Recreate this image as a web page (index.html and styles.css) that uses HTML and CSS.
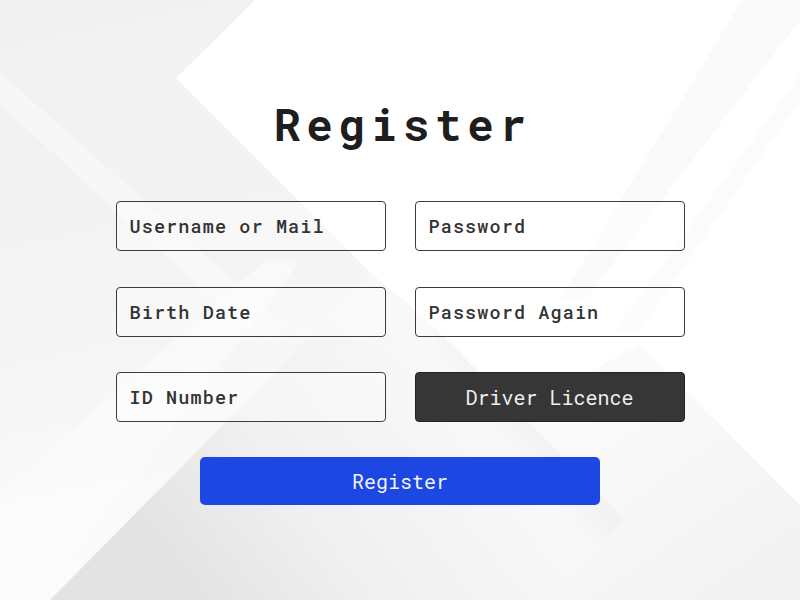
FILE: index.html
```html
<!DOCTYPE html>
<html lang="en">
<head>
<meta charset="utf-8">
<title>Register</title>
<link rel="stylesheet" href="styles.css">
</head>
<body>
<div class="page">
  <svg class="backdrop" width="800" height="600" viewBox="0 0 800 600" aria-hidden="true">
    <defs>
      <linearGradient id="gTL" gradientUnits="userSpaceOnUse" x1="0" y1="0" x2="120" y2="560">
        <stop offset="0" stop-color="#f1f1f1"/>
        <stop offset="0.55" stop-color="#f4f4f4"/>
        <stop offset="1" stop-color="#fbfbfb"/>
      </linearGradient>
      <linearGradient id="gBC" gradientUnits="userSpaceOnUse" x1="170" y1="570" x2="430" y2="370">
        <stop offset="0" stop-color="#e3e3e3"/>
        <stop offset="0.45" stop-color="#f0f0f0"/>
        <stop offset="1" stop-color="#f8f8f8"/>
      </linearGradient>
      <linearGradient id="gAR" gradientUnits="userSpaceOnUse" x1="505" y1="445" x2="585" y2="380">
        <stop offset="0" stop-color="#e8e8e8" stop-opacity="0"/>
        <stop offset="1" stop-color="#e6e6e6"/>
      </linearGradient>
      <linearGradient id="gBR" gradientUnits="userSpaceOnUse" x1="620" y1="400" x2="760" y2="600">
        <stop offset="0" stop-color="#fafafa"/>
        <stop offset="1" stop-color="#f2f2f2"/>
      </linearGradient>
    </defs>
    <rect width="800" height="600" fill="#ffffff"/>
    <polygon points="0,0 255,0 176,78 420,322 362,284 50,600 0,600" fill="url(#gTL)"/>
    <polygon points="0,72 0,104 262,346 284,326" fill="#fafafa" opacity="0.6"/>
    <polygon points="0,494 268,258 300,262 40,600 0,600" fill="#fcfcfc" opacity="0.6"/>
    <polygon points="640,345 800,505 800,600 545,600 625,520 515,410" fill="url(#gBR)"/>
    <polygon points="560,368 800,128 800,146 578,376" fill="#ffffff"/>
    <polygon points="50,600 362,284 370,272 430,323 625,520 545,600" fill="url(#gBC)"/>
    <polygon points="430,323 625,520 600,545 458,404" fill="url(#gAR)"/>
    <polygon points="742,0 800,0 800,20 585,300 560,300" fill="#f7f7f7" opacity="0.6"/>
    <polygon points="800,75 800,100 640,330 615,330" fill="#f8f8f8" opacity="0.6"/>
  </svg>

  <main class="form-wrap">
    <h1 class="title">Register</h1>
    <div class="fields">
      <div class="field">Username or Mail</div>
      <div class="field">Password</div>
      <div class="field">Birth Date</div>
      <div class="field">Password Again</div>
      <div class="field">ID Number</div>
      <button class="licence" type="button">Driver Licence</button>
    </div>
    <button class="submit" type="button">Register</button>
  </main>
</div>
</body>
</html>
```

FILE: styles.css
```css
* {
  box-sizing: border-box;
}

html, body {
  margin: 0;
  padding: 0;
  background: #ffffff;
}

body {
  font-family: "Roboto Mono", "DejaVu Sans Mono", "Liberation Mono", monospace;
}

.page {
  position: relative;
  width: 800px;
  height: 600px;
  overflow: hidden;
}

.backdrop {
  position: absolute;
  left: 0;
  top: 0;
  z-index: 0;
}

.form-wrap {
  position: relative;
  z-index: 1;
  display: flex;
  flex-direction: column;
  align-items: center;
  padding-top: 100px;
}

.title {
  margin: 0;
  height: 48px;
  font-size: 44px;
  line-height: 48px;
  font-weight: 700;
  color: #1e1e1e;
  letter-spacing: 5.8px;
  padding-left: 5.8px;
}

.fields {
  margin-top: 53px;
  width: 569px;
  display: grid;
  grid-template-columns: 270px 270px;
  column-gap: 29px;
  row-gap: 35.5px;
}

.field {
  height: 50px;
  border: 1px solid #3c3c3c;
  border-radius: 4px;
  display: flex;
  align-items: center;
  padding-left: 13px;
  font-size: 18.5px;
  font-weight: 500;
  letter-spacing: 1.1px;
  color: #333333;
  background: rgba(255, 255, 255, 0.35);
}

.licence {
  height: 50px;
  border: 1px solid #222222;
  border-radius: 4px;
  background: #363636;
  color: #efefef;
  font-family: inherit;
  font-size: 20px;
  font-weight: 400;
  padding: 0;
  display: flex;
  align-items: center;
  justify-content: center;
}

.submit {
  margin-top: 35px;
  width: 400px;
  height: 48px;
  border: none;
  border-radius: 5px;
  background: #1c47e3;
  color: #f2f2f2;
  font-family: inherit;
  font-size: 20px;
  font-weight: 400;
  padding: 0;
}
```
